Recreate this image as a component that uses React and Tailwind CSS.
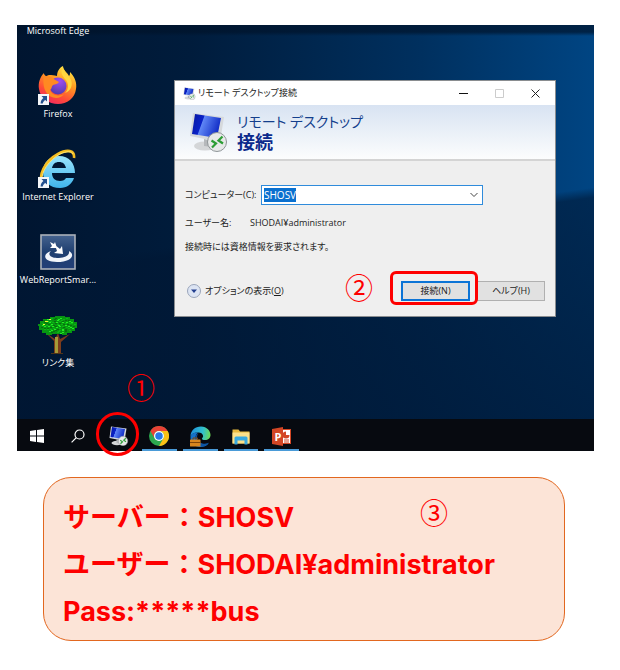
import React from "react";

const ui = "font-['Open_Sans','Noto_Sans_CJK_JP',sans-serif] [font-feature-settings:'palt']";

function Shortcut({ x = 0, y = 25 }) {
  return (
    <g transform={`translate(${x} ${y})`}>
      <rect width="11" height="11" fill="#f4f6f9" />
      <path d="M3.500 2h5.500v5.500L7.300 5.900C5.600 7 5 8 4.800 9.500H2.600C2.600 7 3.800 5.300 5.400 4Z" fill="#24508f" />
    </g>
  );
}

function FirefoxIcon() {
  return (
    <svg width="40" height="40" viewBox="0 0 40 40" aria-hidden="true">
      <defs>
        <linearGradient id="fx" x1="0.8" y1="0" x2="0.3" y2="1">
          <stop offset="0" stopColor="#fff04a" />
          <stop offset="0.4" stopColor="#ff9a20" />
          <stop offset="0.75" stopColor="#ff4a38" />
          <stop offset="1" stopColor="#f02a60" />
        </linearGradient>
        <radialGradient id="fxp" cx="0.6" cy="0.2" r="0.9">
          <stop offset="0" stopColor="#a04df0" />
          <stop offset="1" stopColor="#4a3aa8" />
        </radialGradient>
      </defs>
      <path d="M25 0c0 4 4 6 6 10 1-1 1-2 1-4 5 5 7 11 6 17-1 9-9 15-18 15S2 32 1 23C0 17 2 11 6 7c0 2 0 3 1 4 1-1 3-2 4-2 3 0 5 0 8 1 0-4 2-8 6-10Z" fill="url(#fx)" />
      <circle cx="20" cy="20" r="8.500" fill="url(#fxp)" />
      <path d="M6 8c2 3 4 3 7 3 2 2 5 3 8 5-1 2-4 2-6 3-2 2-1 4-3 5 2 5 8 7 14 4-4 6-14 5-18-2-3-5-3-12-2-18Z" fill="#ff8a22" />
      <path d="M25 1c-3 5-1 8 2 12 4 4 4 10 0 14 6-2 8-8 6-13-2-5-7-7-8-13Z" fill="#ffd640" />
      <Shortcut y={28} />
    </svg>
  );
}

function ExplorerIcon() {
  return (
    <svg width="40" height="40" viewBox="0 0 40 40" aria-hidden="true">
      <defs>
        <linearGradient id="ie" x1="0" y1="0" x2="0" y2="1">
          <stop offset="0" stopColor="#9be4fb" />
          <stop offset="1" stopColor="#3fb4ec" />
        </linearGradient>
      </defs>
      <path fillRule="evenodd" d="M37 24H14c0 5 3 8 8 8 3 0 5-1 6-3h8c-2 6-7 10-14 10C12 39 5 33 5 23 5 13 12 7 21 7c10 0 16 7 16 17ZM14 19h14c-1-4-3-6-7-6s-6 2-7 6Z" fill="url(#ie)" />
      <path d="M5 36C-1 27 7 12 20 5c9-5 17-4 16 4" fill="none" stroke="#f5bd20" strokeWidth="2.6" />
      <path d="M4 31C3 23 11 11 22 5c7-3 12-3 13 0" fill="none" stroke="#ffe774" strokeWidth="1" />
      <Shortcut y={28} />
    </svg>
  );
}

function WebReportIcon() {
  return (
    <svg width="36" height="36" viewBox="0 0 36 36" aria-hidden="true">
      <defs>
        <linearGradient id="wr" x1="0" y1="0" x2="0" y2="1">
          <stop offset="0" stopColor="#45638f" />
          <stop offset="0.5" stopColor="#1f3f70" />
          <stop offset="1" stopColor="#233f78" />
        </linearGradient>
      </defs>
      <rect x="1" y="1" width="34" height="34" fill="url(#wr)" stroke="#aab1ba" strokeWidth="1.6" />
      <path d="M10 8l4 2 1-2 2 6-7 0 2-2Z M15 11l5 4 2-3 1 8-9-1 3-2Z" fill="#fff" />
      <path d="M11 17c-9 3-8 11 6 11 14 0 19-7 12-11 1 5-5 7-12 7-6 0-10-3-6-7Z" fill="#f2f5fa" />
    </svg>
  );
}

const leaves = Array.from({ length: 90 }, (_, i) => {
  const a = i * 2.399;
  const r = Math.sqrt((i + 0.5) / 90);
  return { x: Math.round(19 + Math.cos(a) * r * 17), y: Math.round(10 + Math.sin(a) * r * 8), c: ["#20ed20", "#076f0d", "#09b812"][i % 3] };
});

function TreeIcon() {
  return (
    <svg width="40" height="40" viewBox="0 0 40 40" aria-hidden="true">
      <path d="M8 18l8 8v13h7V27l9-8-10 5-2-6-3 6Z" fill="#7b3b1c" />
      <path d="M17 22h3v16h-3Z" fill="#a59a38" />
      <path d="M13 38h12v1H13Z" fill="#4f3518" />
      <path d="M12 2h5V1h10v1h5v2h4v3h3v6h-2v3h-3v2h-5v2h-5v-1H14v1H8v-2H4v-3H1v-4H0V9h2V6h3V4h7Z" fill="#079512" />
      {leaves.map((l, i) => <rect key={i} x={l.x} y={l.y} width="2" height="1" fill={l.c} />)}
      <path d="M7 6h3v1H7Z M5 9h2v1H5Z M11 4h2v1h-2Z" fill="#e9f530" />
    </svg>
  );
}

function RemoteIcon({ size, id }) {
  return (
    <svg width={size} height={size} viewBox="0 0 40 40" aria-hidden="true">
      <defs>
        <linearGradient id={id} x1="0" y1="0" x2="1" y2="0.3">
          <stop offset="0" stopColor="#0718a0" />
          <stop offset="0.4" stopColor="#0a22c8" />
          <stop offset="0.43" stopColor="#5f86f5" />
          <stop offset="1" stopColor="#1430c8" />
        </linearGradient>
      </defs>
      <ellipse cx="16" cy="34" rx="11" ry="4.500" fill="#d4d6d8" />
      <path d="M15 27l9 2-1 6-8-1Z" fill="#b5b8bb" />
      <path d="M4 1l31 4-4 25L1 24Z" fill="#d6d9dc" />
      <path d="M6 2l26 4-4 20L3 22Z" fill={`url(#${id})`} />
      <circle cx="28" cy="30" r="9.500" fill="#e7e9e9" stroke="#8f9598" strokeWidth="1" />
      <path d="M22.500 28.500l4.500 3-4 4M33.500 24.500l-4 4 4.500 3" fill="none" stroke="#2c9d35" strokeWidth="2.200" />
    </svg>
  );
}

function WindowsIcon() {
  return (
    <svg width="14" height="14" viewBox="0 0 14 14" aria-hidden="true">
      <path d="M0 2l6-1v5.500H0ZM7 1l7-1v6.500H7ZM0 7.500h6V13l-6-1ZM7 7.500h7V14l-7-1Z" fill="#fff" />
    </svg>
  );
}

function SearchIcon() {
  return (
    <svg width="14" height="14" viewBox="0 0 14 14" aria-hidden="true">
      <circle cx="8.500" cy="5.500" r="4.500" fill="none" stroke="#fff" strokeWidth="1.200" />
      <path d="M5.300 8.700L.6 13.400" stroke="#fff" strokeWidth="1.200" />
    </svg>
  );
}

function ChromeIcon() {
  return (
    <svg width="20" height="20" viewBox="0 0 48 48" aria-hidden="true">
      <circle cx="24" cy="24" r="24" fill="#2da94f" />
      <path d="M3.200 12A24 24 0 0 1 44.800 12H24a12 12 0 0 0-10.400 18Z" fill="#e94235" />
      <path d="M24 48L34.400 30A12 12 0 0 0 24 12h20.800A24 24 0 0 1 24 48Z" fill="#fbc116" />
      <circle cx="24" cy="24" r="12" fill="#fff" />
      <circle cx="24" cy="24" r="9" fill="#2879e8" />
    </svg>
  );
}

function EdgeIcon() {
  return (
    <svg width="21" height="21" viewBox="0 0 42 42" aria-hidden="true">
      <defs>
        <linearGradient id="ed" x1="0" y1="0.4" x2="1" y2="0.5">
          <stop offset="0" stopColor="#1e8fdc" />
          <stop offset="0.6" stopColor="#30c0cf" />
          <stop offset="1" stopColor="#6cdb55" />
        </linearGradient>
      </defs>
      <path d="M1 21C1 9 10 1 22 1s19 9 19 17c0 6-5 10-11 10-4 0-6-1-6-3 0-1 3-2 2-6-1-5-6-7-11-6C8 13 3 16 1 21Z" fill="url(#ed)" />
      <path d="M1 21c2-6 8-9 15-8-7 5-8 20 6 24 6 2 12 0 16-3-5 6-11 8-17 8C9 42 0 32 1 21Z" fill="#1672c8" />
      <path d="M17 14c-6 8-2 19 8 21 6 1 10 0 13-2-5 8-14 10-21 6C8 34 7 20 17 14Z" fill="#0d55a4" />
      <rect x="0" y="27" width="21" height="14" rx="1" fill="#d9861e" />
      <path d="M6 27v-3h9v3M0 33h21" fill="none" stroke="#824609" strokeWidth="2" />
    </svg>
  );
}

function FolderIcon() {
  return (
    <svg width="18" height="17" viewBox="0 0 36 34" aria-hidden="true">
      <path d="M1 3h12l3 4h19v24H1Z" fill="#e8b93f" />
      <path d="M1 9h34v22H1Z" fill="#fbe08b" />
      <path d="M5 33V20q0-3 3-3h20q3 0 3 3v13h-6v-8H11v8Z" fill="#38a9df" />
    </svg>
  );
}

function PowerPointIcon() {
  return (
    <svg width="19" height="19" viewBox="0 0 38 38" aria-hidden="true">
      <rect x="18" y="5" width="19" height="28" fill="#fff" stroke="#d34725" strokeWidth="2" />
      <path d="M28 9v7h7a7 7 0 1 1-7-7Z" fill="#d34725" />
      <path d="M24 26h10M24 30h10" stroke="#d34725" strokeWidth="2" />
      <path d="M0 4L22 0v38L0 34Z" fill="#d24625" />
      <text x="5" y="27" fontFamily="Open Sans" fontSize="22" fontWeight="700" fill="#fff">P</text>
    </svg>
  );
}

const shortcuts = [
  { label: "Firefox", icon: <FirefoxIcon /> },
  { label: "Internet Explorer", icon: <ExplorerIcon /> },
  { label: "WebReportSmar...", icon: <WebReportIcon /> },
  { label: "リンク集", icon: <TreeIcon /> },
];

const tasks = [
  { label: "スタート", icon: <WindowsIcon /> },
  { label: "検索", icon: <SearchIcon /> },
  { label: "リモート デスクトップ接続", icon: <RemoteIcon size={20} id="rdTask" /> },
  { label: "Chrome", icon: <ChromeIcon />, open: true },
  { label: "Edge", icon: <EdgeIcon />, open: true },
  { label: "エクスプローラー", icon: <FolderIcon />, open: true },
  { label: "PowerPoint", icon: <PowerPointIcon />, open: true },
];

function Mark({ children, className }) {
  return (
    <span className={`absolute font-['Noto_Sans_CJK_JP',sans-serif] text-[28px] leading-7 text-[#fe0000] ${className}`}>
      {children}
    </span>
  );
}

function Dialog() {
  return (
    <section className="absolute left-[157px] top-[55px] w-[382px] border border-[#8a8d90] bg-[#efefef] text-[9px] leading-4 text-[#1c1c1c]">
      <header className="flex h-6 items-center bg-white pr-0.5 pl-2">
        <RemoteIcon size={13} id="rdTitle" />
        <h1 className="ml-0.5 grow">リモート デスクトップ接続</h1>
        <button aria-label="最小化" className="flex w-9 justify-center">
          <svg width="9" height="9" viewBox="0 0 9 9"><path d="M0 4.500h9" stroke="#111" /></svg>
        </button>
        <button aria-label="最大化" disabled className="flex w-9 justify-center">
          <svg width="9" height="9" viewBox="0 0 9 9"><path d="M.5.500h8v8h-8Z" fill="none" stroke="#ccc" /></svg>
        </button>
        <button aria-label="閉じる" className="flex w-9 justify-center">
          <svg width="9" height="9" viewBox="0 0 9 9"><path d="M.5.500l8 8M8.500.500l-8 8" stroke="#222" /></svg>
        </button>
      </header>
      <div className="flex h-14 items-center gap-2 border-b-2 border-[#d4d4d4] bg-linear-to-b from-[#d8e3f2] to-[#fcfdfd] pl-3.5 text-[#143f8c]">
        <RemoteIcon size={40} id="rdHead" />
        <div className="leading-5">
          <p className="text-sm leading-5">リモート デスクトップ</p>
          <p className="text-lg leading-5 font-bold text-[#0b2a8c]">接続</p>
        </div>
      </div>
      <form className="px-2.5 pt-6 pb-[15px]" onSubmit={(e) => e.preventDefault()}>
        <div className="flex items-center">
          <label htmlFor="computer" className="w-[76px] whitespace-nowrap">コンピューター(C):</label>
          <div className="flex h-5 w-[222px] items-center justify-between border border-[#2f8bdb] bg-white px-0.5">
            <input id="computer" defaultValue="SHOSV" className="field-sizing-content bg-[#0a70cf] text-[10px] leading-3.5 text-white outline-none" />
            <button type="button" aria-label="一覧" className="px-0.5">
              <svg width="8" height="6" viewBox="0 0 8 6"><path d="M.5 1L4 4.500 7.500 1" fill="none" stroke="#444" /></svg>
            </button>
          </div>
        </div>
        <div className="mt-2.5 flex">
          <span className="w-[65px]">ユーザー名:</span>
          <span>SHODAI¥administrator</span>
        </div>
        <p className="mt-2">接続時には資格情報を要求されます。</p>
        <div className="mt-[26px] flex items-center">
          <button type="button" className="flex grow items-center gap-1 pl-0.5">
            <svg width="14" height="14" viewBox="0 0 14 14" aria-hidden="true">
              <circle cx="7" cy="7" r="6.500" fill="#dce4f3" stroke="#9aa5ba" />
              <path d="M4 5.500h6L7 9Z" fill="#233f8f" />
            </svg>
            <span>オプションの表示(<u>O</u>)</span>
          </button>
          <button type="submit" className="h-5 w-[69px] border-2 border-[#0c74d6] bg-[#e1e1e1]">接続(N)</button>
          <button type="button" className="ml-[7px] h-5 w-[68px] border border-[#b0b0b0] bg-[#e1e1e1]">ヘルプ(H)</button>
        </div>
      </form>
    </section>
  );
}

export default function App() {
  return (
    <main lang="ja" className="bg-white pt-[25px] pr-[26px] pb-7 pl-[17px]">
      <div className={`relative flex h-[426px] flex-col bg-[linear-gradient(180deg,#00132ab0_0px,#00132ab0_7px,transparent_11px),linear-gradient(172deg,transparent_0%,transparent_48%,#00173499_50%,#001734cc_100%),linear-gradient(90deg,#001530_0%,#001c3c_30%,#00305f_70%,#004583_100%)] ${ui}`}>
        <ul className="flex w-[82px] grow flex-col items-center text-[9px] leading-4 text-white">
          <li className="-mt-0.5">Microsoft Edge</li>
          {shortcuts.map((s) => (
            <li key={s.label} className="mt-[27px] flex w-full flex-col items-center">
              <div className="flex h-10 items-center">{s.icon}</div>
              <span className="text-shadow-sm">{s.label}</span>
            </li>
          ))}
        </ul>
        <nav className="h-8 bg-[#070a10]">
          <div className="grid h-full w-[285px] grid-cols-7">
            {tasks.map((t) => (
              <button key={t.label} aria-label={t.label} className={`mx-[3px] flex items-center justify-center border-b-2 pt-1 ${t.open ? "border-[#4a9bd8]" : "border-transparent"}`}>
                {t.icon}
              </button>
            ))}
          </div>
        </nav>
        <Dialog />
        <span className="absolute top-[387px] left-[79px] h-11 w-[43px] rounded-full border-3 border-[#fe0000]" />
        <span className="absolute top-[246px] left-[373px] h-[34px] w-[88px] rounded-md border-3 border-[#fe0000]" />
        <Mark className="top-[348px] left-[110px]">①</Mark>
        <Mark className="top-[248px] left-[328px]">②</Mark>
      </div>
      <section className="relative mt-[26px] mr-1 ml-[26px] max-w-[522px] rounded-[28px] border border-[#e2671f] bg-[#fce4d7] px-[19px] pt-4 pb-[5px] font-['Inter','Noto_Sans_CJK_JP',sans-serif] text-[27px] leading-[47px] font-bold whitespace-nowrap text-[#fe0000]">
        <p>サーバー：SHOSV</p>
        <p>ユーザー：SHODAI¥administrator</p>
        <p>Pass:*****bus</p>
        <Mark className="top-5 left-[376px] font-normal">③</Mark>
      </section>
    </main>
  );
}
